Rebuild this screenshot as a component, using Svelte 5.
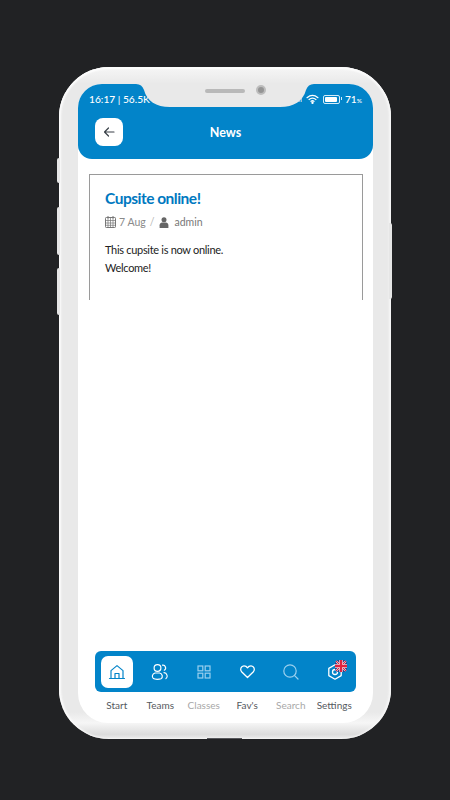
<script>
  const tabs = [
    { label: 'Start', icon: 'home', active: true },
    { label: 'Teams', icon: 'teams' },
    { label: 'Classes', icon: 'grid', muted: true },
    { label: "Fav's", icon: 'heart' },
    { label: 'Search', icon: 'search', muted: true },
    { label: 'Settings', icon: 'gear' }
  ];
</script>

<div class="page">
  <div class="phone">
    <span class="side-btn left one"></span>
    <span class="side-btn left two"></span>
    <span class="side-btn left three"></span>
    <span class="side-btn right"></span>
    <span class="bottom-gap"></span>

    <div class="notch">
      <svg class="notch-shape" width="178" height="23" viewBox="-6 0 178 23" fill="#e9e9e9">
        <path d="M-6 0Q0 0 2 6C5 17 14 23 28 23H138C152 23 161 17 164 6Q166 0 172 0Z" />
      </svg>
      <span class="speaker"></span>
      <span class="camera"></span>
    </div>

    <div class="screen">
      <header class="header">
        <div class="status">
          <span class="status-left">16:17 | 56.5K</span>
          <div class="status-right">
            <span class="signal">ıfı</span>
            <svg width="13" height="10" viewBox="0 0 14 11" fill="none" stroke="#fff" stroke-width="1.4" stroke-linecap="round">
              <path d="M1 4 Q7 -1 13 4" />
              <path d="M3.200 6 Q7 3 10.800 6" />
              <path d="M5.400 8 Q7 6.800 8.600 8" />
              <circle cx="7" cy="9.600" r=".6" fill="#fff" />
            </svg>
            <span class="battery"><span class="battery-fill"></span></span>
            <span class="percent">71<small>%</small></span>
          </div>
        </div>
        <div class="titlebar">
          <button class="back" aria-label="Back">
            <svg width="14" height="14" viewBox="0 0 14 14" fill="none" stroke="#3a4148" stroke-width="1.200" stroke-linecap="round" stroke-linejoin="round">
              <path d="M12 7H2.500M6.500 3 2.500 7l4 4" />
            </svg>
          </button>
          <h1>News</h1>
        </div>
      </header>

      <main class="content">
        <article class="card">
          <h2>Cupsite online!</h2>
          <div class="meta">
            <svg width="11" height="12" viewBox="0 0 11 12" fill="none" stroke="#777" stroke-width="1">
              <rect x=".5" y="1.500" width="10" height="10" rx=".8" />
              <path d="M.5 4.500h10M.5 7h10M.5 9.300h10M3 1.500v10M5.500 1.500v10M8 1.500v10" stroke-width=".7" />
              <path d="M3 0v2.500M8 0v2.500" />
            </svg>
            <span>7 Aug</span>
            <span class="slash">/</span>
            <svg class="user" width="10" height="11" viewBox="0 0 10 11" fill="#666">
              <circle cx="5" cy="2.800" r="2.500" />
              <path d="M.6 11V8.200C.6 6.400 2 5.600 3 5.600h4c1 0 2.400.8 2.400 2.600V11z" />
            </svg>
            <span class="author">admin</span>
          </div>
          <p>This cupsite is now online.</p>
          <p>Welcome!</p>
        </article>
      </main>

      <nav class="nav">
        <div class="tabs">
          {#each tabs as tab}
            <div class="tab">
              <span class="tile" class:active={tab.active} class:muted={tab.muted}>
                {#if tab.icon === 'home'}
                  <svg width="18" height="18" viewBox="0 0 18 18" fill="none" stroke="#0284c9" stroke-width="1.200" stroke-linejoin="round" stroke-linecap="round">
                    <path d="M3 15V7.600L9 2.600l6 5V15" />
                    <path d="M7 15v-4.500h4V15" />
                    <path d="M1.500 15.500h15" />
                  </svg>
                {:else if tab.icon === 'teams'}
                  <svg width="18" height="18" viewBox="0 0 18 18" fill="none" stroke="#fff" stroke-width="1.200" stroke-linecap="round">
                    <circle cx="6.500" cy="5" r="3.400" />
                    <path d="M2.400 15.600c-2-1.600-1-5 1.600-5.600h4.600c3 .6 3.600 4.600 1.400 5.800-1.600.6-6 .8-7.600-.2z" />
                    <path d="M11.500 2.200c2.800-.4 4.400 3.400 1.800 5M13 9.600c3 .2 4.400 4.400 2 6" />
                  </svg>
                {:else if tab.icon === 'grid'}
                  <svg width="16" height="16" viewBox="0 0 16 16" fill="none" stroke="currentColor" stroke-width="1.200">
                    <rect x="2" y="2" width="4.800" height="4.800" />
                    <rect x="9.200" y="2" width="4.800" height="4.800" />
                    <rect x="2" y="9.200" width="4.800" height="4.800" />
                    <rect x="9.200" y="9.200" width="4.800" height="4.800" />
                  </svg>
                {:else if tab.icon === 'heart'}
                  <svg width="17" height="17" viewBox="0 0 17 17" fill="none" stroke="#fff" stroke-width="1.300" stroke-linejoin="round">
                    <path d="M8.500 14.500 2.600 8.800C.6 6.600 2 2.800 5 2.800c1.600 0 2.800.8 3.500 2 .7-1.200 1.900-2 3.500-2 3 0 4.400 3.800 2.400 6z" />
                  </svg>
                {:else if tab.icon === 'search'}
                  <svg width="18" height="18" viewBox="0 0 18 18" fill="none" stroke="currentColor" stroke-width="1.200" stroke-linecap="round">
                    <circle cx="8" cy="8" r="6.200" />
                    <path d="M12.600 12.600 16 16" />
                  </svg>
                {:else}
                  <span class="gear">
                    <svg width="18" height="18" viewBox="0 0 18 18" fill="none" stroke="#fff" stroke-width="1.300" stroke-linejoin="round">
                      <path d="M9 1.800 15.200 5.400v7.200L9 16.200 2.800 12.600V5.400z" />
                      <circle cx="9" cy="9" r="2.500" />
                    </svg>
                    <svg class="flag" width="12" height="12" viewBox="0 0 12 12">
                      <defs>
                        <clipPath id="flag-round"><rect width="12" height="12" rx="4" /></clipPath>
                      </defs>
                      <g clip-path="url(#flag-round)">
                        <rect width="12" height="12" fill="#2b3f86" />
                        <path d="M0 0 12 12M12 0 0 12" stroke="#f3c6cf" stroke-width="2" />
                        <path d="M0 0 12 12M12 0 0 12" stroke="#e0233f" stroke-width="1" />
                        <path d="M6 0v12M0 6h12" stroke="#fff" stroke-width="3.400" />
                        <path d="M6 0v12M0 6h12" stroke="#e0233f" stroke-width="2.400" />
                      </g>
                    </svg>
                  </span>
                {/if}
              </span>
            </div>
          {/each}
        </div>
        <div class="labels">
          {#each tabs as tab}
            <span class="label" class:muted={tab.muted}>{tab.label}</span>
          {/each}
        </div>
      </nav>
    </div>
  </div>
</div>

<style>
  :global(body) {
    background: #212224;
    font-family: Lato, "Open Sans", sans-serif;
  }

  .page {
    height: 800px;
    padding-top: 67px;
    box-sizing: border-box;
    display: flex;
    justify-content: center;
    overflow: hidden;
  }

  .phone {
    position: relative;
    width: 332px;
    height: 672px;
    box-sizing: border-box;
    padding: 17px 18px 16px 19px;
    border-radius: 50px;
    background: linear-gradient(180deg, #f6f6f6 0, #e9e9e9 2.500%, #e9e9e9 96%, #f6f6f6 97.600%, #dcdcdc 99.300%, #ececec 100%);
    box-shadow: inset 2px 0 2px #fbfbfb, inset -2px 0 2px #f6f6f6, inset 0 2px 2px #fff;
  }

  .side-btn {
    position: absolute;
    width: 3px;
    background: #e6e6e6;
  }

  .side-btn.left { left: -2px; border-radius: 2px 0 0 2px; }
  .side-btn.one { top: 91px; height: 25px; }
  .side-btn.two { top: 140px; height: 48px; }
  .side-btn.three { top: 201px; height: 47px; }
  .side-btn.right { right: -1px; top: 156px; height: 76px; border-radius: 0 2px 2px 0; }

  .bottom-gap {
    position: absolute;
    left: 148px;
    bottom: 0;
    width: 35px;
    height: 1px;
    background: #55565a;
  }

  .notch {
    position: absolute;
    z-index: 2;
    top: 17px;
    left: 83px;
    width: 166px;
    height: 23px;
  }

  .notch-shape {
    position: absolute;
    left: -6px;
    top: 0;
  }

  .speaker {
    position: absolute;
    left: 63px;
    top: 5px;
    width: 40px;
    height: 4px;
    border-radius: 2px;
    background: #b9b9b9;
  }

  .camera {
    position: absolute;
    left: 114px;
    top: 1px;
    width: 6px;
    height: 6px;
    border-radius: 50%;
    border: 2px solid #bdbdbd;
    background: #949494;
  }

  .screen {
    height: 100%;
    display: flex;
    flex-direction: column;
    background: #fff;
    border-radius: 24px 24px 30px 30px;
    overflow: hidden;
  }

  .header {
    height: 75px;
    flex: none;
    box-sizing: border-box;
    padding: 8px 0 0 11px;
    background: #0284c9;
    border-radius: 0 0 14px 14px;
    color: #fff;
  }

  .status {
    display: flex;
    justify-content: space-between;
    align-items: center;
    height: 14px;
    padding-right: 11px;
    font-size: 10.200px;
    font-weight: 500;
  }

  .status-right {
    display: flex;
    align-items: center;
    gap: 3px;
  }

  .signal {
    font-size: 7px;
    font-weight: 700;
    margin-right: 1px;
    opacity: .8;
  }

  .battery {
    display: block;
    position: relative;
    width: 17px;
    height: 9px;
    padding: 1px;
    box-sizing: border-box;
    border: 1px solid #d5ecf8;
    border-radius: 2px;
    margin-left: 1px;
  }

  .battery::after {
    content: '';
    position: absolute;
    right: -3px;
    top: 1px;
    width: 1px;
    height: 3px;
    background: #d5ecf8;
  }

  .battery-fill {
    display: block;
    width: 90%;
    height: 100%;
    border-radius: 1px;
    background: #fff;
  }

  .percent {
    margin-left: 2px;
  }

  .percent small {
    font-size: 6.500px;
  }

  .titlebar {
    display: flex;
    align-items: center;
    margin-top: 12px;
    padding-left: 6px;
  }

  .back {
    width: 28px;
    height: 28px;
    padding: 0;
    display: flex;
    align-items: center;
    justify-content: center;
    border: none;
    border-radius: 8px;
    background: #fff;
  }

  h1 {
    margin: 0 0 0 60px;
    flex: 1;
    padding-right: 105px;
    text-align: center;
    font-size: 12.500px;
    font-weight: 700;
    color: #fff;
  }

  .content {
    flex: 1;
    padding: 15px 10px 0 11px;
  }

  .card {
    height: 126px;
    box-sizing: border-box;
    padding: 14px 15px 0;
    border: 1px solid #9a9a9a;
    border-bottom: none;
  }

  h2 {
    margin: 0;
    font-size: 15.500px;
    line-height: 19px;
    letter-spacing: -.5px;
    font-weight: 700;
    color: #0078c0;
  }

  .meta {
    display: flex;
    align-items: center;
    gap: 3px;
    margin-top: 7px;
    margin-bottom: 14px;
    height: 14px;
    font-size: 10.500px;
    color: #8a8a8a;
  }

  .slash { color: #b5b5b5; margin-left: 1px; }
  .user { margin-left: 2px; }
  .author { margin-left: 2px; color: #777; }

  p {
    margin: 0 0 4px;
    font-size: 11px;
    line-height: 14px;
    letter-spacing: -.3px;
    color: #222;
  }

  .nav {
    flex: none;
    padding: 0 17px 11px;
  }

  .tabs {
    display: grid;
    grid-template-columns: repeat(6, 1fr);
    height: 41px;
    align-items: center;
    background: #0284c9;
    border-radius: 6px;
  }

  .tab {
    display: flex;
    justify-content: center;
  }

  .tile {
    width: 32px;
    height: 32px;
    display: flex;
    align-items: center;
    justify-content: center;
    border-radius: 7px;
  }

  .tile.active { background: #fff; }
  .tile.muted { color: #9bd0ee; }

  .gear {
    position: relative;
    display: flex;
    left: 1px;
  }

  .flag {
    position: absolute;
    right: -3px;
    top: -3px;
  }

  .labels {
    display: grid;
    grid-template-columns: repeat(6, 1fr);
    margin-top: 7px;
    height: 13px;
    line-height: 13px;
    text-align: center;
    font-size: 10px;
    color: #55595e;
    white-space: nowrap;
  }

  .label.muted { color: #a8a8a8; }
</style>
